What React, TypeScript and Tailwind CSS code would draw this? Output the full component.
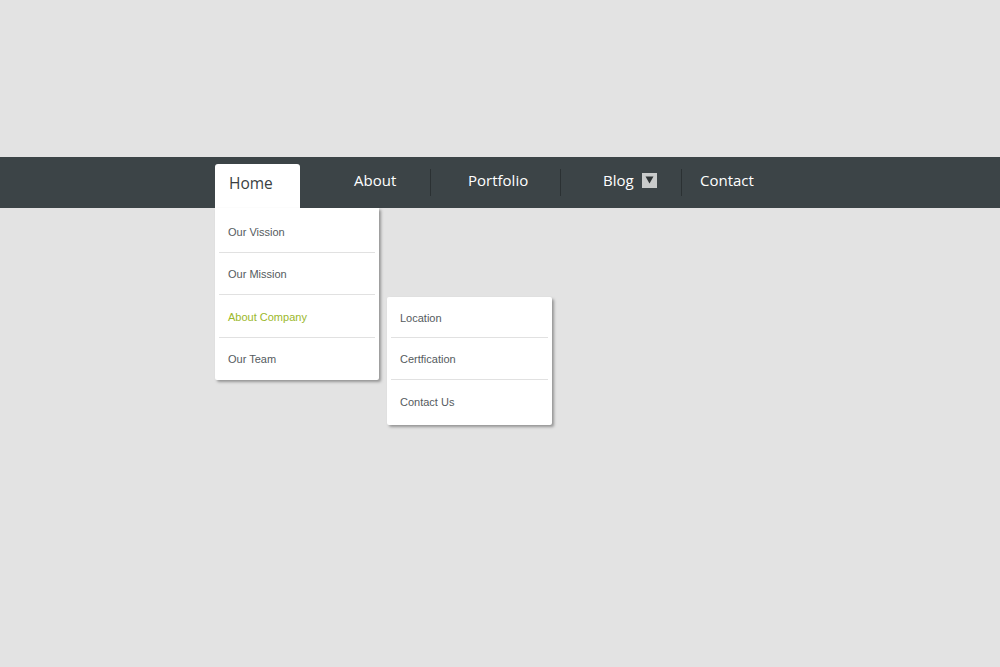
import React from "react";

const subItems = ["Location", "Certfication", "Contact Us"];

const DropItem: React.FC<{ label: string; active?: boolean; last?: boolean; h: string }> = ({
  label,
  active,
  last,
  h,
}) => (
  <div
    className={`mx-[4px] flex items-center px-[9px] ${h} ${last ? "" : "border-b border-[#e1e1e1] pt-[2px]"}`}
  >
    <span
      className={`text-[11px] ${active ? "text-[#9bb82a]" : "text-[#555b5e]"}`}
      style={{ fontFamily: '"Liberation Sans", Arial, sans-serif' }}
    >
      {label}
    </span>
  </div>
);

export default function App() {
  return (
    <div
      className="relative h-[667px] w-full bg-[#e3e3e3]"
      style={{ fontFamily: '"Open Sans", "Noto Sans", sans-serif' }}
    >
      <div className="h-[157px]" />
      {/* Nav bar */}
      <nav className="relative h-[51px] bg-[#3c4447]">
        <div className="flex h-full items-end pl-[215px]">
          {/* Home tab */}
          <div className="relative h-[44px] w-[85px] rounded-t-[3px] bg-white">
            <span className="absolute left-[14px] top-[8px] text-[15.5px] text-[#3a3f42]">Home</span>

            {/* Dropdown */}
            <div className="absolute left-0 top-[44px] z-10 w-[164px] rounded-b-[2px] bg-white pt-[3px] shadow-[2px_2px_3px_rgba(0,0,0,0.35)]">
              <DropItem label="Our Vission" h="h-[42px]" />
              <DropItem label="Our Mission" h="h-[42px]" />
              <div className="relative">
                <DropItem label="About Company" active h="h-[43px]" />
                {/* Sub dropdown */}
                <div className="absolute left-[172px] top-[2px] w-[165px] rounded-[2px] bg-white shadow-[2px_2px_3px_rgba(0,0,0,0.35)]">
                  {subItems.map((s, i) => (
                    <DropItem
                      key={s}
                      label={s}
                      last={i === subItems.length - 1}
                      h={i === 0 ? "h-[41px]" : i === 1 ? "h-[42px]" : "h-[45px]"}
                    />
                  ))}
                </div>
              </div>
              <DropItem label="Our Team" last h="h-[42px]" />
            </div>
          </div>

          <div className="flex h-full items-center pb-[5px]">
            <span className="ml-[54px] w-[76px] text-[15px] text-white">About</span>
            <div className="mt-[5px] h-[27px] w-px bg-[#2b3133]" />
            <span className="ml-[37px] w-[92px] text-[15px] text-white">Portfolio</span>
            <div className="mt-[5px] h-[27px] w-px bg-[#2b3133]" />
            <div className="ml-[42px] flex w-[78px] items-center">
              <span className="text-[15px] text-white">Blog</span>
              <span className="ml-[8px] flex h-[15px] w-[15px] items-center justify-center bg-[#c9cbcb]">
                <svg width="9" height="8" viewBox="0 0 9 8">
                  <path d="M0.5 0.5 H8.5 L4.5 7.5 Z" fill="#2f3436" />
                </svg>
              </span>
            </div>
            <div className="mt-[5px] h-[27px] w-px bg-[#2b3133]" />
            <span className="ml-[18px] text-[15px] text-white">Contact</span>
          </div>
        </div>
      </nav>
    </div>
  );
}
